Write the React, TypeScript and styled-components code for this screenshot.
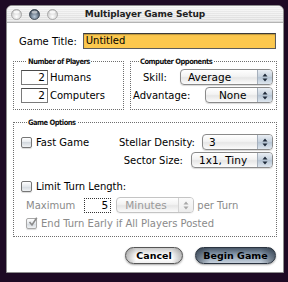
import { createGlobalStyle, styled } from "styled-components"

const GlobalStyle = createGlobalStyle`
  html, body {
    margin: 0;
    padding: 0;
    background: #1e0a24;
  }
  body {
    width: 288px;
    height: 282px;
    overflow: hidden;
    font-family: "DejaVu Sans", "Liberation Sans", sans-serif;
    font-size: 10px;
    color: #000;
  }
`

const Page = styled.div`
  padding: 5px 4px 0 6px;
`

const Window = styled.div`
  width: 278px;
  height: 268px;
  box-sizing: border-box;
  background: #fff;
  border: 1px solid #8e8e8e;
  border-radius: 6px 6px 0 0;
  display: flex;
  flex-direction: column;
`

const TitleBar = styled.div`
  height: 16px;
  display: grid;
  grid-template-columns: 1fr auto 1fr;
  align-items: center;
  border-radius: 5px 5px 0 0;
  border-bottom: 1px solid #b4b4b4;
  background:
    repeating-linear-gradient(to bottom, rgba(255, 255, 255, 0.5) 0 1px, transparent 1px 2px),
    linear-gradient(#f0f0f0, #dcdcdc);
`

const Lights = styled.div`
  display: flex;
  gap: 7px;
  padding-left: 4px;
`

const Title = styled.div`
  font-weight: bold;
  font-size: 9px;
  letter-spacing: -0.1px;
  color: #222;
`

const Body = styled.div`
  padding: 10px 6px 0 6px;
  display: flex;
  flex-direction: column;
`

const TitleRow = styled.div`
  display: flex;
  align-items: center;
  gap: 6px;
  padding-left: 6px;
  margin-right: 1px;
`

const YellowField = styled.div`
  flex: 1;
  height: 16px;
  box-sizing: border-box;
  border: 1px solid #5c5c5c;
  border-top-color: #3a3a3a;
  background: #fcc84e;
  box-shadow: inset 0 1px 1px rgba(0, 0, 0, 0.25);
  padding-left: 2px;
  line-height: 14px;
`

const GroupsRow = styled.div`
  display: flex;
  gap: 6px;
  margin-top: 8px;
`

const Group = styled.fieldset<{ $w?: number }>`
  margin: 0;
  ${(p) => (p.$w ? `width: ${p.$w}px;` : "flex: 1;")}
  box-sizing: border-box;
  border: 1px dotted #6e6e6e;
  min-width: 0;
  display: flex;
  flex-direction: column;
`

const Legend = styled.legend`
  margin-left: 6px;
  padding: 0 1px;
  font-family: "DejaVu Sans Condensed", "DejaVu Sans", sans-serif;
  font-stretch: condensed;
  font-weight: bold;
  font-size: 7.5px;
  line-height: 9px;
  letter-spacing: -0.5px;
  color: #111;
`

const PlayersGroup = styled(Group)`
  padding: 3px 6px 6px 7px;
  gap: 2px;
`

const OpponentsGroup = styled(Group)`
  padding: 3px 3px 6px 2px;
  gap: 2px;
`

const OptionsGroup = styled(Group)`
  margin-top: 8px;
  padding: 7px 3px 5px 7px;
`

const Row = styled.div<{ $top?: number; $indent?: number }>`
  display: flex;
  align-items: center;
  height: 16px;
  margin-top: ${(p) => p.$top ?? 0}px;
  padding-left: ${(p) => p.$indent ?? 0}px;
`

const NumberField = styled.div<{ $disabled?: boolean }>`
  width: 27px;
  height: 15px;
  box-sizing: border-box;
  border: 1px ${(p) => (p.$disabled ? "dotted #333" : "solid #7a7a7a")};
  border-top-color: ${(p) => (p.$disabled ? "#333" : "#4a4a4a")};
  text-align: right;
  padding-right: 2px;
  line-height: 13px;
  font-size: 10.5px;
  color: #000;
`

const Label = styled.span<{ $indent?: number; $gap?: number; $disabled?: boolean }>`
  margin-left: ${(p) => p.$indent ?? 0}px;
  margin-right: ${(p) => p.$gap ?? 0}px;
  color: ${(p) => (p.$disabled ? "#8a8a8a" : "#000")};
  white-space: nowrap;
`

const Spacer = styled.div`
  flex: 1;
`

const PopupBox = styled.div<{ $w: number; $disabled?: boolean }>`
  width: ${(p) => p.$w}px;
  height: 16px;
  box-sizing: border-box;
  display: flex;
  border: 1px solid ${(p) => (p.$disabled ? "#c4c4c4" : "#8a8a8a")};
  border-radius: 4px;
  background: linear-gradient(#ffffff, #f3f3f3 45%, #e6e6e6 55%, #fbfbfb);
  box-shadow: 0 1px 1px rgba(0, 0, 0, ${(p) => (p.$disabled ? 0.05 : 0.15)});
  overflow: hidden;
`

const PopupText = styled.div<{ $indent: number; $disabled?: boolean }>`
  flex: 1;
  padding-left: ${(p) => p.$indent}px;
  line-height: 14px;
  font-size: 10.5px;
  color: ${(p) => (p.$disabled ? "#9a9a9a" : "#000")};
  white-space: nowrap;
`

const PopupArrows = styled.div<{ $disabled?: boolean }>`
  width: 14px;
  display: flex;
  align-items: center;
  justify-content: center;
  border-left: 1px solid ${(p) => (p.$disabled ? "#d4d4d4" : "#a6b0bc")};
  background: ${(p) =>
    p.$disabled ? "linear-gradient(#fafafa, #ececec)" : "linear-gradient(#e9eef4, #c4d0dc 50%, #b3c2d2 50%, #dfe7ef)"};
`

const Check = styled.span<{ $disabled?: boolean }>`
  width: 11px;
  height: 11px;
  box-sizing: border-box;
  border: 1px solid ${(p) => (p.$disabled ? "#a8a8a8" : "#767676")};
  border-radius: 2px;
  background: linear-gradient(#ffffff, #e4e8ec 50%, #d2d8de 50%, #f0f2f4);
  box-shadow: 0 1px 1px rgba(0, 0, 0, 0.15);
  display: flex;
  align-items: center;
  justify-content: center;
  margin-right: 4px;
  flex: none;
`

const ButtonRow = styled.div`
  display: flex;
  justify-content: flex-end;
  gap: 12px;
  margin-top: 10px;
  margin-right: 1px;
`

const Button = styled.div<{ $w: number; $default?: boolean }>`
  width: ${(p) => p.$w}px;
  height: 17px;
  box-sizing: border-box;
  border: 1px solid ${(p) => (p.$default ? "#2b3440" : "#555")};
  border-radius: 9px;
  display: flex;
  align-items: center;
  justify-content: center;
  font-weight: bold;
  font-size: 9.5px;
  color: #000;
  box-shadow: 0 1px 2px rgba(0, 0, 0, 0.35);
  background: ${(p) =>
    p.$default
      ? `linear-gradient(to right, rgba(30,40,52,0.55), transparent 18%, transparent 82%, rgba(30,40,52,0.55)),
         linear-gradient(#4a5868, #8394a7 40%, #a5b4c4 70%, #c6d1dc)`
      : `linear-gradient(to right, rgba(60,60,60,0.35), transparent 18%, transparent 82%, rgba(60,60,60,0.35)),
         linear-gradient(#c8c8c8, #f4f4f4 40%, #ffffff 70%, #f0f0f0)`};
`

const Light = ({ dark }: { dark?: boolean }) => (
  <svg width="11" height="11" viewBox="0 0 11 11">
    <defs>
      <radialGradient id={dark ? "ld" : "lg"} cx="50%" cy="70%" r="60%">
        <stop offset="0%" stopColor={dark ? "#b8c8d8" : "#ffffff"} />
        <stop offset="100%" stopColor={dark ? "#3e4c5c" : "#c8c8c8"} />
      </radialGradient>
    </defs>
    <circle cx="5.5" cy="5.5" r="5" fill={`url(#${dark ? "ld" : "lg"})`} stroke={dark ? "#2e3844" : "#9c9c9c"} strokeWidth="0.8" />
    <ellipse cx="5.5" cy="3" rx="3" ry="1.6" fill="#fff" opacity={dark ? 0.55 : 0.8} />
  </svg>
)

const Arrows = ({ disabled }: { disabled?: boolean }) => (
  <svg width="6" height="9" viewBox="0 0 6 9">
    <path d="M3 0.5 L5.5 3.5 H0.5 Z M3 8.5 L5.5 5.5 H0.5 Z" fill={disabled ? "#a8a8a8" : "#1e2a3a"} />
  </svg>
)

const Popup = ({ w, text, indent = 7, disabled }: { w: number; text: string; indent?: number; disabled?: boolean }) => (
  <PopupBox $w={w} $disabled={disabled}>
    <PopupText $indent={indent} $disabled={disabled}>
      {text}
    </PopupText>
    <PopupArrows $disabled={disabled}>
      <Arrows disabled={disabled} />
    </PopupArrows>
  </PopupBox>
)

const CheckBox = ({ checked, disabled }: { checked?: boolean; disabled?: boolean }) => (
  <Check $disabled={disabled}>
    {checked && (
      <svg width="10" height="10" viewBox="0 0 10 10" style={{ marginTop: -2, marginRight: -2 }}>
        <path d="M1.5 5 L4 8 L8.8 0.8" fill="none" stroke={disabled ? "#8c8c8c" : "#111"} strokeWidth="1.6" />
      </svg>
    )}
  </Check>
)

export default function App() {
  return (
    <>
      <GlobalStyle />
      <Page>
        <Window>
          <TitleBar>
            <Lights>
              <Light />
              <Light dark />
              <Light />
            </Lights>
            <Title>Multiplayer Game Setup</Title>
            <div />
          </TitleBar>
          <Body>
            <TitleRow>
              <Label>Game Title:</Label>
              <YellowField>Untitled</YellowField>
            </TitleRow>

            <GroupsRow>
              <PlayersGroup $w={111}>
                <Legend>Number of Players</Legend>
                <Row>
                  <NumberField>2</NumberField>
                  <Label $indent={2}>Humans</Label>
                </Row>
                <Row>
                  <NumberField>2</NumberField>
                  <Label $indent={2}>Computers</Label>
                </Row>
              </PlayersGroup>

              <OpponentsGroup>
                <Legend>Computer Opponents</Legend>
                <Row>
                  <Label $indent={10}>Skill:</Label>
                  <Spacer />
                  <Popup w={93} text="Average" />
                </Row>
                <Row>
                  <Label>Advantage:</Label>
                  <Spacer />
                  <Popup w={68} text="None" indent={13} />
                </Row>
              </OpponentsGroup>
            </GroupsRow>

            <OptionsGroup>
              <Legend>Game Options</Legend>
              <Row>
                <CheckBox />
                <Label>Fast Game</Label>
                <Spacer />
                <Label $gap={7}>Stellar Density:</Label>
                <Popup w={71} text="3" indent={6} />
              </Row>
              <Row $top={2}>
                <Spacer />
                <Label $gap={8}>Sector Size:</Label>
                <Popup w={82} text="1x1, Tiny" />
              </Row>
              <Row $top={10}>
                <CheckBox />
                <Label>Limit Turn Length:</Label>
              </Row>
              <Row $top={3} $indent={5}>
                <Label $disabled $gap={9}>
                  Maximum
                </Label>
                <NumberField $disabled>5</NumberField>
                <Label $indent={5} />
                <Popup w={78} text="Minutes" indent={8} disabled />
                <Label $indent={3} $disabled>
                  per Turn
                </Label>
              </Row>
              <Row $top={2} $indent={5}>
                <CheckBox checked disabled />
                <Label $disabled>End Turn Early if All Players Posted</Label>
              </Row>
            </OptionsGroup>

            <ButtonRow>
              <Button $w={58}>Cancel</Button>
              <Button $w={81} $default>
                Begin Game
              </Button>
            </ButtonRow>
          </Body>
        </Window>
      </Page>
    </>
  )
}
